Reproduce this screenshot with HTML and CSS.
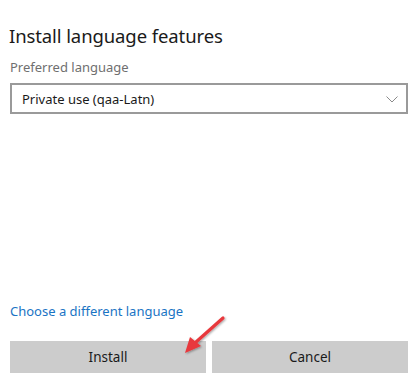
FILE: index.html
```html
<!DOCTYPE html>
<html>
<head>
<meta charset="utf-8">
<link rel="stylesheet" href="styles.css">
</head>
<body>
<div class="dialog">
  <h1 class="title">Install language features</h1>
  <div class="label">Preferred language</div>
  <div class="select">
    <span class="select-text">Private use (qaa-Latn)</span>
    <svg class="chevron" width="12" height="7" viewBox="0 0 12 7"><path d="M0.5 0.5 L6 6 L11.5 0.5" fill="none" stroke="#8a8a8a" stroke-width="1"/></svg>
  </div>
  <div class="spacer"></div>
  <a class="link" href="#">Choose a different language</a>
  <div class="buttons">
    <button class="btn">Install</button>
    <button class="btn">Cancel</button>
  </div>
  <svg class="arrow" width="60" height="50" viewBox="0 0 60 50">
    <defs>
      <filter id="sh" x="-30%" y="-30%" width="160%" height="160%">
        <feDropShadow dx="1" dy="1" stdDeviation="1.2" flood-color="#000" flood-opacity="0.35"/>
      </filter>
    </defs>
    <g filter="url(#sh)">
      <line x1="48" y1="7" x2="21" y2="31" stroke="#e8393c" stroke-width="3.2" stroke-linecap="round"/>
      <polygon points="10,42 15,26 26,35" fill="#e8393c"/>
    </g>
  </svg>
</div>
</body>
</html>
```
FILE: styles.css
```css
html, body {
  margin: 0;
  padding: 0;
  background: #ffffff;
}
.dialog {
  position: relative;
  width: 415px;
  height: 383px;
  box-sizing: border-box;
  padding: 0 7px 0 10px;
  display: flex;
  flex-direction: column;
  font-family: "Noto Sans", "Open Sans", sans-serif;
}
.title {
  margin: 24px 0 0 -1px;
  font-size: 18.5px;
  font-weight: 400;
  color: #1a1a1a;
  line-height: 24px;
  letter-spacing: -0.1px;
}
.label {
  margin-top: 10px;
  font-size: 13px;
  line-height: 18px;
  color: #6f6f6f;
}
.select {
  margin-top: 7px;
  height: 31px;
  box-sizing: border-box;
  border: 2px solid #9a9a9a;
  display: flex;
  align-items: center;
  justify-content: space-between;
  padding: 0 8px 0 10px;
}
.select-text {
  font-size: 13px;
  color: #1a1a1a;
}
.chevron {
  display: block;
  margin-top: 1px;
}
.spacer {
  flex: 1;
}
.link {
  font-size: 13px;
  line-height: 18px;
  color: #1a74c4;
  text-decoration: none;
}
.buttons {
  margin-top: 21px;
  margin-bottom: 10px;
  display: grid;
  grid-template-columns: 1fr 1fr;
  gap: 6px;
}
.btn {
  height: 32px;
  border: none;
  background: #cccccc;
  font-family: "Noto Sans", "Open Sans", sans-serif;
  font-size: 13.5px;
  color: #1a1a1a;
  padding: 0;
}
.arrow {
  position: absolute;
  left: 175px;
  top: 311px;
}
```
